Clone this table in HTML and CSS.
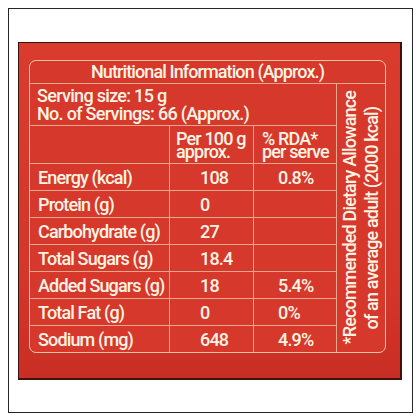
FILE: index.html
```html
<!DOCTYPE html>
<html lang="en">
<head>
<meta charset="utf-8">
<title>Nutritional Information</title>
<link rel="stylesheet" href="styles.css">
</head>
<body>
<div class="frame">
  <div class="panel">
    <div class="table">
      <div class="cell title">Nutritional Information (Approx.)</div>
      <div class="cell serving">Serving size: 15 g<br>No. of Servings: 66 (Approx.)</div>
      <div class="cell note"><span class="note-text">*Recommended Dietary Allowance<br>of an average adult (2000 kcal)</span></div>

      <div class="cell"></div>
      <div class="cell head per">Per 100 g<br>approx.</div>
      <div class="cell head rda">% RDA*<br>per serve</div>

      <div class="cell label">Energy (kcal)</div>
      <div class="cell val">108</div>
      <div class="cell pct">0.8%</div>

      <div class="cell label">Protein (g)</div>
      <div class="cell val">0</div>
      <div class="cell pct"></div>

      <div class="cell label">Carbohydrate (g)</div>
      <div class="cell val">27</div>
      <div class="cell pct"></div>

      <div class="cell label">Total Sugars (g)</div>
      <div class="cell val">18.4</div>
      <div class="cell pct"></div>

      <div class="cell label">Added Sugars (g)</div>
      <div class="cell val">18</div>
      <div class="cell pct">5.4%</div>

      <div class="cell label">Total Fat (g)</div>
      <div class="cell val">0</div>
      <div class="cell pct">0%</div>

      <div class="cell label">Sodium (mg)</div>
      <div class="cell val">648</div>
      <div class="cell pct">4.9%</div>
    </div>
  </div>
</div>
</body>
</html>
```
FILE: styles.css
```css
html, body {
  margin: 0;
  padding: 0;
  background: #ffffff;
}

body {
  padding: 8px;
}

.frame {
  box-sizing: border-box;
  width: 405px;
  height: 405px;
  border: 1px solid #262626;
  background: #ffffff;
  padding-top: 33px;
  padding-left: 9px;
}

.panel {
  width: 384px;
  height: 338px;
  box-sizing: border-box;
  border-style: solid;
  border-color: #3a120e;
  border-width: 1px 2px 2px 1px;
  background: linear-gradient(180deg, #d93b2d 0%, #d4362a 70%, #c92e24 100%);
  padding-top: 17px;
  padding-left: 10px;
}

.table {
  width: 357px;
  box-sizing: border-box;
  display: grid;
  grid-template-columns: 139px 83px 82px 48px;
  grid-template-rows: 22px 41px 37px repeat(7, 26px);
  gap: 1px;
  border: 1px solid #f1c2a6;
  border-radius: 7px;
  overflow: hidden;
  background: #e9a88e;
  font-family: Roboto, "Liberation Sans", sans-serif;
  font-size: 18px;
  font-weight: 500;
  letter-spacing: -0.85px;
  color: #fff4e4;
}

.cell {
  background: #d6382b;
  display: flex;
  align-items: center;
  white-space: nowrap;
}

.title {
  grid-column: 1 / 5;
  justify-content: center;
  line-height: 22px;
  letter-spacing: -0.9px;
}

.serving {
  grid-column: 1 / 4;
  padding-left: 7px;
  line-height: 18px;
  letter-spacing: -0.7px;
}

.note {
  grid-column: 4;
  grid-row: 2 / 11;
  justify-content: center;
}

.note-text {
  writing-mode: vertical-rl;
  transform: rotate(180deg);
  text-align: center;
  line-height: 22px;
}

.head {
  line-height: 13px;
}

.per {
  padding-left: 6px;
}

.rda {
  padding-left: 8px;
}

.label {
  padding-left: 8px;
}

.val {
  padding-left: 30px;
}

.pct {
  padding-left: 24px;
}
```
